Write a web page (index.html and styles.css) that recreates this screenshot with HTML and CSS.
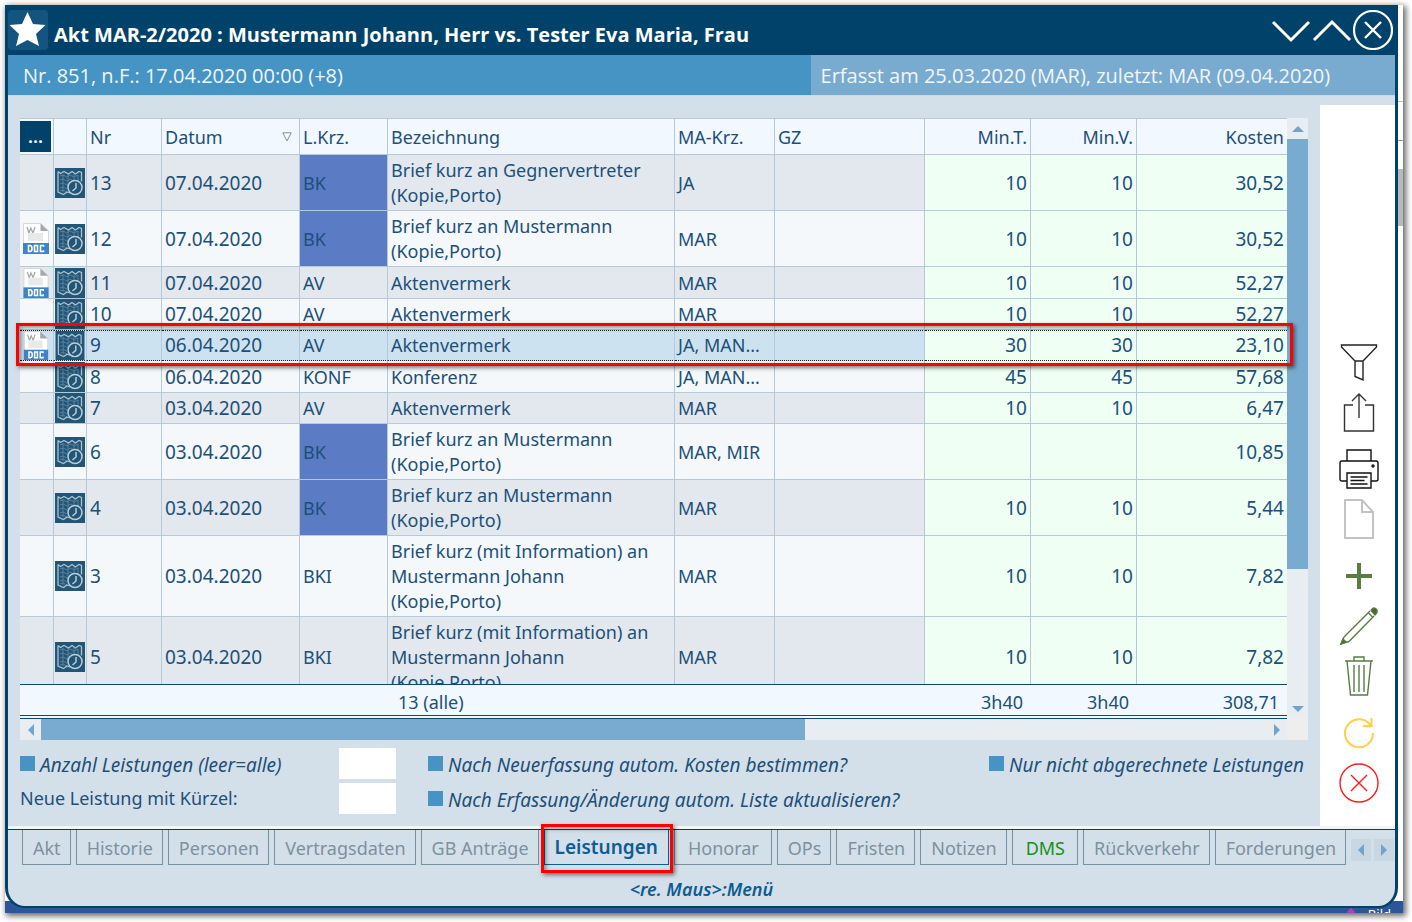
FILE: index.html
```html
<!DOCTYPE html>
<html lang="de">
<head>
<meta charset="utf-8">
<meta name="viewport" content="width=device-width, initial-scale=1">
<title>Akt MAR-2/2020</title>
<link rel="stylesheet" href="styles.css">
</head>
<body>
<svg class="sprite" aria-hidden="true">
  <symbol id="map" viewBox="0 0 30 30">
    <rect width="30" height="30" fill="#235676"/>
    <path d="M5 8l3-1 4 2 3-2 4 2 4-2v7M5 12l3-1 4 2 3-2 4 2M5 16l3-1 4 2 2-1M5 20l3-1 4 2M5 23l3-1 4 2M8 6v18M13 6v10M19 6v6" fill="none" stroke="#54809b" stroke-width="1"/>
    <path d="M3 3.500l2.500 2L9 3.500l4.500 2.500L17 3.500l3.500 2.500L24 3.500l2.500 1v9M3 3.500V24l5.500 2.500L12 24l3 1" fill="none" stroke="#a9c3d2" stroke-width="1.300"/>
    <circle cx="20" cy="19.500" r="7" fill="#235676" stroke="#b9ced9" stroke-width="1.500"/>
    <path d="M21 15v5l-3.500 3" fill="none" stroke="#b9ced9" stroke-width="1.500"/>
  </symbol>
  <symbol id="doc" viewBox="0 0 26 31">
    <path d="M.5.500h17L25.500 8v22.500H.5z" fill="#fff" stroke="#d6d8da"/>
    <path d="M17.500.500L25.500 8h-8z" fill="#a5a7aa"/>
    <path d="M4 4l2 6 1.800-5L10 10l2-6" fill="none" stroke="#a4a6a8" stroke-width="1.300"/>
    <path d="M5 10h15v8H5z" fill="#e8eaea"/>
    <path d="M0 20h26v11H0z" fill="#3f82c7"/>
    <path d="M5.500 22.500v6h1.500q2 0 2-3t-2-3zM11.500 22.500h3v6h-3zM20.500 23.800v-1.300h-3v6h3v-1.300" fill="none" stroke="#fff" stroke-width="1.600"/>
  </symbol>
</svg>
<div class="backdrop">
  <div class="edge-lines"></div>
  <div class="edge-thumb"></div>
  <main class="window">
    <header class="titlebar">
      <button class="star" aria-label="Favorit"><svg width="40" height="40" viewBox="0 0 40 40"><path d="M19.500 2l5.500 12 12.500 1-9.500 9 3 12-11.500-6L8 36l3-12-9.500-9L14 14z" fill="#fff"/></svg></button>
      <h1>Akt MAR-2/2020 : Mustermann Johann, Herr vs. Tester Eva Maria, Frau</h1>
      <div class="window-buttons">
        <button aria-label="Nach unten"><svg width="40" height="40" viewBox="0 0 40 40"><path d="M2 12l18 18 18-18" fill="none" stroke="#fff" stroke-width="3"/></svg></button>
        <button aria-label="Nach oben"><svg width="40" height="40" viewBox="0 0 40 40"><path d="M2 30l18-18 18 18" fill="none" stroke="#fff" stroke-width="3"/></svg></button>
        <button aria-label="Schließen"><svg width="40" height="40" viewBox="0 0 40 40"><circle cx="20" cy="20" r="19" fill="none" stroke="#fff" stroke-width="2.200"/><path d="M12 12l16 16M28 12L12 28" stroke="#fff" stroke-width="2.400"/></svg></button>
      </div>
    </header>
    <div class="infobar">
      <div class="info-main">Nr. 851, n.F.: 17.04.2020 00:00 (+8)</div>
      <div class="info-side">Erfasst am 25.03.2020 (MAR), zuletzt: MAR (09.04.2020)</div>
    </div>
    <div class="content">
      <div class="left">
        <section class="grid">
          <div class="table-wrap">
            <table>
              <colgroup><col class="c33"><col class="c34"><col class="c75"><col class="c138"><col class="c87"><col><col class="c100"><col class="c150"><col class="c106"><col class="c106"><col class="c150"></colgroup>
              <thead>
                <tr><th class="ic"><button class="more">...</button></th><th></th><th>Nr</th><th><span class="sort">Datum <svg width="10" height="10" viewBox="0 0 10 10"><path d="M.8.800h8.400L5 9z" fill="none" stroke="#8a9196"/></svg></span></th><th>L.Krz.</th><th>Bezeichnung</th><th>MA-Krz.</th><th>GZ</th><th class="num">Min.T.</th><th class="num">Min.V.</th><th class="num">Kosten</th></tr>
              </thead>
              <tbody>
                <tr><td></td><td class="ic"><svg class="map"><use href="#map"/></svg></td><td class="d">13</td><td class="d">07.04.2020</td><td class="bk">BK</td><td>Brief kurz an Gegnervertreter<br>(Kopie,Porto)</td><td>JA</td><td></td><td class="num">10</td><td class="num">10</td><td class="num">30,52</td></tr>
                <tr><td class="ic"><svg class="doc"><use href="#doc"/></svg></td><td class="ic"><svg class="map"><use href="#map"/></svg></td><td class="d">12</td><td class="d">07.04.2020</td><td class="bk">BK</td><td>Brief kurz an Mustermann<br>(Kopie,Porto)</td><td>MAR</td><td></td><td class="num">10</td><td class="num">10</td><td class="num">30,52</td></tr>
                <tr class="roomy"><td class="ic"><svg class="doc cut"><use href="#doc"/></svg></td><td class="ic"><svg class="map"><use href="#map"/></svg></td><td class="d">11</td><td class="d">07.04.2020</td><td>AV</td><td>Aktenvermerk</td><td>MAR</td><td></td><td class="num">10</td><td class="num">10</td><td class="num">52,27</td></tr>
                <tr><td></td><td class="ic"><svg class="map"><use href="#map"/></svg></td><td class="d">10</td><td class="d">07.04.2020</td><td>AV</td><td>Aktenvermerk</td><td>MAR</td><td></td><td class="num">10</td><td class="num">10</td><td class="num">52,27</td></tr>
                <tr class="selected"><td class="ic"><svg class="doc cut"><use href="#doc"/></svg></td><td class="ic"><svg class="map"><use href="#map"/></svg></td><td class="d">9</td><td class="d">06.04.2020</td><td>AV</td><td>Aktenvermerk</td><td>JA, MAN...</td><td></td><td class="num">30</td><td class="num">30</td><td class="num">23,10</td></tr>
                <tr class="roomy"><td></td><td class="ic"><svg class="map"><use href="#map"/></svg></td><td class="d">8</td><td class="d">06.04.2020</td><td>KONF</td><td>Konferenz</td><td>JA, MAN...</td><td></td><td class="num">45</td><td class="num">45</td><td class="num">57,68</td></tr>
                <tr><td></td><td class="ic"><svg class="map"><use href="#map"/></svg></td><td class="d">7</td><td class="d">03.04.2020</td><td>AV</td><td>Aktenvermerk</td><td>MAR</td><td></td><td class="num">10</td><td class="num">10</td><td class="num">6,47</td></tr>
                <tr><td></td><td class="ic"><svg class="map"><use href="#map"/></svg></td><td class="d">6</td><td class="d">03.04.2020</td><td class="bk">BK</td><td>Brief kurz an Mustermann<br>(Kopie,Porto)</td><td>MAR, MIR</td><td></td><td class="num"></td><td class="num"></td><td class="num">10,85</td></tr>
                <tr><td></td><td class="ic"><svg class="map"><use href="#map"/></svg></td><td class="d">4</td><td class="d">03.04.2020</td><td class="bk">BK</td><td>Brief kurz an Mustermann<br>(Kopie,Porto)</td><td>MAR</td><td></td><td class="num">10</td><td class="num">10</td><td class="num">5,44</td></tr>
                <tr><td></td><td class="ic"><svg class="map"><use href="#map"/></svg></td><td class="d">3</td><td class="d">03.04.2020</td><td>BKI</td><td>Brief kurz (mit Information) an<br>Mustermann Johann<br>(Kopie,Porto)</td><td>MAR</td><td></td><td class="num">10</td><td class="num">10</td><td class="num">7,82</td></tr>
                <tr><td></td><td class="ic"><svg class="map"><use href="#map"/></svg></td><td class="d">5</td><td class="d">03.04.2020</td><td>BKI</td><td>Brief kurz (mit Information) an<br>Mustermann Johann<br>(Kopie,Porto)</td><td>MAR</td><td></td><td class="num">10</td><td class="num">10</td><td class="num">7,82</td></tr>
              </tbody>
              <tfoot>
                <tr><td colspan="5"></td><td class="count">13 (alle)</td><td colspan="2"></td><td class="num">3h40</td><td class="num">3h40</td><td class="num">308,71</td></tr>
              </tfoot>
            </table>
          </div>
          <div class="vbar"><button class="arrow" aria-label="Hoch"><svg width="12" height="6"><path d="M0 6l6-6 6 6z"/></svg></button><div class="vthumb"></div><div class="track"></div><button class="arrow" aria-label="Runter"><svg width="12" height="6"><path d="M0 0l6 6 6-6z"/></svg></button></div>
          <div class="hbar"><button class="arrow" aria-label="Links"><svg width="6" height="12"><path d="M6 0L0 6l6 6z"/></svg></button><div class="hthumb"></div><div class="track"></div><button class="arrow" aria-label="Rechts"><svg width="6" height="12"><path d="M0 0l6 6-6 6z"/></svg></button></div>
          <div class="corner"></div>
          <div class="mark mark-row"></div>
        </section>
        <form class="options">
          <label class="check"><input type="checkbox"><span>Anzahl Leistungen (leer=alle)</span></label>
          <input class="field" type="text" aria-label="Anzahl Leistungen">
          <label class="check"><input type="checkbox"><span>Nach Neuerfassung autom. Kosten bestimmen?</span></label>
          <label class="check last"><input type="checkbox"><span>Nur nicht abgerechnete Leistungen</span></label>
          <label for="kuerzel">Neue Leistung mit Kürzel:</label>
          <input class="field" type="text" id="kuerzel">
          <label class="check"><input type="checkbox"><span>Nach Erfassung/Änderung autom. Liste aktualisieren?</span></label>
        </form>
      </div>
      <aside class="tools">
        <div class="group">
          <button aria-label="Filter"><svg viewBox="0 0 40 40" stroke="#222"><path d="M2.500 3h35v2L24 19v19l-8-3.500V19L2.500 5zM16 19h8"/></svg></button>
          <button aria-label="Export"><svg viewBox="0 0 40 40" stroke="#333"><path d="M14 13H5.500v26h29V13H26M20 26V2M13 9l7-7 7 7"/></svg></button>
        </div>
        <div class="group">
          <button aria-label="Drucken"><svg viewBox="0 0 40 40" stroke="#111"><path d="M8 12V1h24v11M8 32H3q-2 0-2-2V14q0-2 2-2h34q2 0 2 2v16q0 2-2 2h-5M8 24h24v15H8zM11.500 28h17M11.500 31.500h14M11.500 35h17"/><circle cx="34" cy="17" r="1"/></svg></button>
          <button aria-label="Neues Dokument"><svg class="thick" viewBox="0 0 40 40" stroke="#c3c3c3"><path d="M6 1h17l11 12v26H6zM23 1v12h11"/></svg></button>
        </div>
        <div class="group">
          <button aria-label="Hinzufügen"><svg class="heavy" viewBox="0 0 40 40" stroke="#587c42"><path d="M7 20h26M20 7v26"/></svg></button>
          <button aria-label="Bearbeiten"><svg viewBox="0 0 40 40" stroke="#587c42"><path d="M5 31L31 5M10 35.500L35 10M29 6.500l5 5M5 31l-3 7 8-2.500"/><path d="M32 4.500q2-4 5-1.500t-1 6zM4 33l-2 5 5-2z" fill="#48682f"/></svg></button>
          <button aria-label="Löschen"><svg viewBox="0 0 40 40" stroke="#587c42"><path d="M6 5h28M8 5l3.500 34h17L32 5M15 5V1h10v4M15 9v27M20 9v27M25 9v27"/></svg></button>
        </div>
        <div class="group">
          <button aria-label="Aktualisieren"><svg class="thick" viewBox="0 0 40 40" stroke="#ffcf48"><path d="M34 20A14 14 0 1 1 29.500 10l3 3M32.500 5v8H24"/></svg></button>
          <button aria-label="Abbrechen"><svg viewBox="0 0 40 40" stroke="#ff1a1a"><circle cx="20" cy="20" r="19"/><path d="M12 12l16 16M28 12L12 28"/></svg></button>
        </div>
      </aside>
    </div>
    <nav class="tabs">
      <button class="tab">Akt</button>
      <button class="tab">Historie</button>
      <button class="tab">Personen</button>
      <button class="tab">Vertragsdaten</button>
      <button class="tab">GB Anträge</button>
      <button class="tab active">Leistungen<span class="mark mark-tab"></span></button>
      <button class="tab wide">Honorar</button>
      <button class="tab">OPs</button>
      <button class="tab">Fristen</button>
      <button class="tab">Notizen</button>
      <button class="tab wide dms">DMS</button>
      <button class="tab">Rückverkehr</button>
      <button class="tab">Forderungen</button>
      <span class="tab-arrows">
        <button aria-label="Tabs zurück"><svg width="6" height="12"><path d="M6 0L0 6l6 6z"/></svg></button>
        <button aria-label="Tabs weiter"><svg width="6" height="12"><path d="M0 0l6 6-6 6z"/></svg></button>
      </span>
    </nav>
    <footer class="hint">&lt;re. Maus&gt;:Menü</footer>
  </main>
  <div class="taskbar"><span class="pin"></span><span class="under">Bild</span></div>
</div>
</body>
</html>
```
FILE: styles.css
```css
* { box-sizing: border-box; }

body {
  margin: 0;
  height: 100vh;
  padding: 5px 9px 9px 5px;
  background: #fff;
  font-family: "Noto Sans", "Open Sans", sans-serif;
  font-size: 18px;
  line-height: 25px;
  color: #1d5078;
}

button, input { font: inherit; color: inherit; padding: 0; border: 0; background: none; }
svg { display: block; }
.sprite { position: absolute; width: 0; height: 0; }

.backdrop {
  position: relative;
  height: 100%;
  padding: 0 5px 5px 0;
  background: #fff;
  box-shadow: 2px 2px 6px 1px rgba(0, 0, 0, 0.6);
}
.edge-lines {
  position: absolute;
  right: 0;
  top: 96px;
  width: 5px;
  height: 40px;
  border-top: 1px solid #bbb;
  border-bottom: 1px solid #999;
}
.edge-thumb { position: absolute; right: 0; top: 164px; width: 5px; height: 57px; background: #b9b9b9; }
.taskbar {
  position: absolute;
  left: 0;
  right: 0;
  bottom: 0;
  height: 12px;
  background: #2b579a;
  overflow: hidden;
}
.pin { position: absolute; right: 49px; top: 8px; width: 6px; height: 6px; transform: rotate(45deg); background: #b03fb0; }
.under { position: absolute; right: 12px; top: 5px; font-size: 13px; line-height: 17px; color: #fff; }

.window {
  position: relative;
  z-index: 1;
  height: 100%;
  display: flex;
  flex-direction: column;
  border: solid #00426a;
  border-width: 0 3px 2px 3px;
  border-radius: 0 0 20px 20px;
  background: #d4e0e9;
  overflow: hidden;
}

.titlebar { display: flex; align-items: center; height: 50px; background: #00426a; color: #fff; }
.star { width: 40px; height: 40px; border-radius: 4px; background: #14557f; }
h1 { flex: 1; margin: 0; padding: 8px 0 0 6px; font-family: "Open Sans", sans-serif; font-size: 20px; font-weight: 700; }
.window-buttons { display: flex; gap: 1px; padding-right: 2px; }

.infobar { display: flex; height: 41px; line-height: 42px; font-family: "Open Sans", sans-serif; font-size: 20px; color: #f0f6fb; border-bottom: 1px solid #c5d9e7; }
.info-main { flex: 802; padding-left: 15px; background: #4694c4; }
.info-side { flex: 585; padding-left: 10px; background: #79abd0; }

.content { flex: 1; min-height: 0; display: flex; padding-top: 9px; border-bottom: 3px solid #f2f5f8; }
.left { flex: 1; min-width: 0; display: flex; flex-direction: column; padding: 13px 12px 12px 12px; }

.grid { position: relative; flex: 1; min-height: 0; display: grid; grid-template: 1fr 21px / 1fr 21px; }
.table-wrap { overflow: hidden; min-height: 0; }
table { width: 100%; table-layout: fixed; border-spacing: 0; }
.c33 { width: 34px; }
.c34 { width: 33px; }
.c75 { width: 75px; }
.c87 { width: 88px; }
.c100 { width: 100px; }
.c106 { width: 106px; }
.c138 { width: 138px; }
.c150 { width: 150px; }
th, td { padding: 3px 3px 2px; text-align: left; border: solid #b4cada; border-width: 0 1px 1px 0; white-space: nowrap; }
th { height: 37px; font-weight: 400; background: #f1f8ff; border-top-width: 1px; }
tr > :last-child { border-right: 0; }
tbody tr { height: 31px; background: #f4f8fb; }
tbody tr.roomy { height: 32px; }
tbody tr:nth-child(odd) { background: #e2e8ee; }
tbody .num { background: #f0fff4; }
.num { text-align: right; }
tbody .num, .d { font-size: 19px; }
.ic, td.ic { padding: 0 1px; }
.map { width: 30px; height: 30px; }
.doc { width: 26px; height: 31px; margin: 0 2px; }
.doc.cut { height: 30px; }
.bk { background: #5b7bc5; }
.more { width: 31px; height: 31px; margin-left: -1px; line-height: 31px; background: #00426a; color: #fff; font-weight: 600; }
.sort { display: flex; justify-content: space-between; align-items: center; padding-right: 4px; }
tbody tr.selected { background: #cde2f0; }
.selected td { border-top: 1px dotted #222; border-bottom: 1px dotted #222; padding-top: 2px; }
.selected td.ic { padding-top: 0; }
.selected .ic svg { height: 29px; }
tfoot td { position: sticky; bottom: 0; padding: 5px 8px 0; height: 35px; border: solid #0b4a73; border-width: 1px 0 4px; border-bottom-style: double; background: #f1f8ff; }
tfoot .count { padding-left: 10px; }

.vbar { display: flex; flex-direction: column; background: #e8edf2; }
.hbar { display: flex; background: #e8edf2; }
.arrow { flex: none; width: 21px; height: 21px; display: grid; place-items: center; }
.arrow svg, .tab-arrows svg { fill: #6fa5cd; }
.vthumb { flex: 430; background: #79abd0; }
.vthumb + .track { flex: 129; }
.hthumb { flex: 764; background: #79abd0; }
.hthumb + .track { flex: 461; }
.corner { background: #eee; }

.mark { position: absolute; z-index: 2; border: 3px solid #f00; box-shadow: 2px 2px 4px rgba(0, 0, 0, 0.5), inset 2px 2px 4px rgba(0, 0, 0, 0.4); pointer-events: none; }
.mark-row { left: -4px; right: 15px; top: 205px; height: 43px; }
.mark-tab { left: -4px; right: -5px; top: -6px; bottom: -9px; }

.options {
  display: grid;
  grid-template-columns: 303px 57px 1fr auto;
  grid-auto-rows: 31px;
  align-items: center;
  gap: 4px 16px;
  padding-top: 8px;
}
.check { display: flex; align-items: center; gap: 5px; font-size: 19px; font-style: italic; }
.check span { padding-top: 3px; }
.check input { appearance: none; width: 15px; height: 15px; margin: 0; background: #4694c4; }
.field { width: 100%; height: 31px; background: #fff; }
.field + .check { padding-left: 16px; }

.tools { width: 75px; display: flex; flex-direction: column; align-items: center; justify-content: flex-end; gap: 17px; padding: 0 0 23px 2px; background: #fff; }
.group { display: flex; flex-direction: column; gap: 10px; }
.tools button { width: 40px; height: 40px; }
.tools svg { width: 40px; height: 40px; fill: none; stroke-width: 1.4; }
.tools .thick { stroke-width: 2; }
.tools .heavy { stroke-width: 4; }
.last { padding-right: 4px; }

.tabs { display: flex; gap: 5px; height: 36px; padding-left: 14px; border-top: 1px solid #00426a; }
.tab { position: relative; padding: 2px 9px 0 10px; border: solid #78909f; border-width: 0 1px 1px; color: #7d919f; white-space: nowrap; }
.tab.wide { padding: 2px 12px 0 13px; }
.tab.active { padding: 0 10px; color: #0c5c95; border-color: #0c5c95; font-size: 19px; font-weight: 600; }
.tab.dms { color: #149214; }
.tab-arrows { display: flex; gap: 3px; padding-top: 9px; }
.tab-arrows button { width: 20px; height: 22px; display: grid; place-items: center; background: #c8d7e2; }

.hint { height: 41px; padding-top: 12px; text-align: center; font-style: italic; font-weight: 600; color: #0c5c95; }
```
